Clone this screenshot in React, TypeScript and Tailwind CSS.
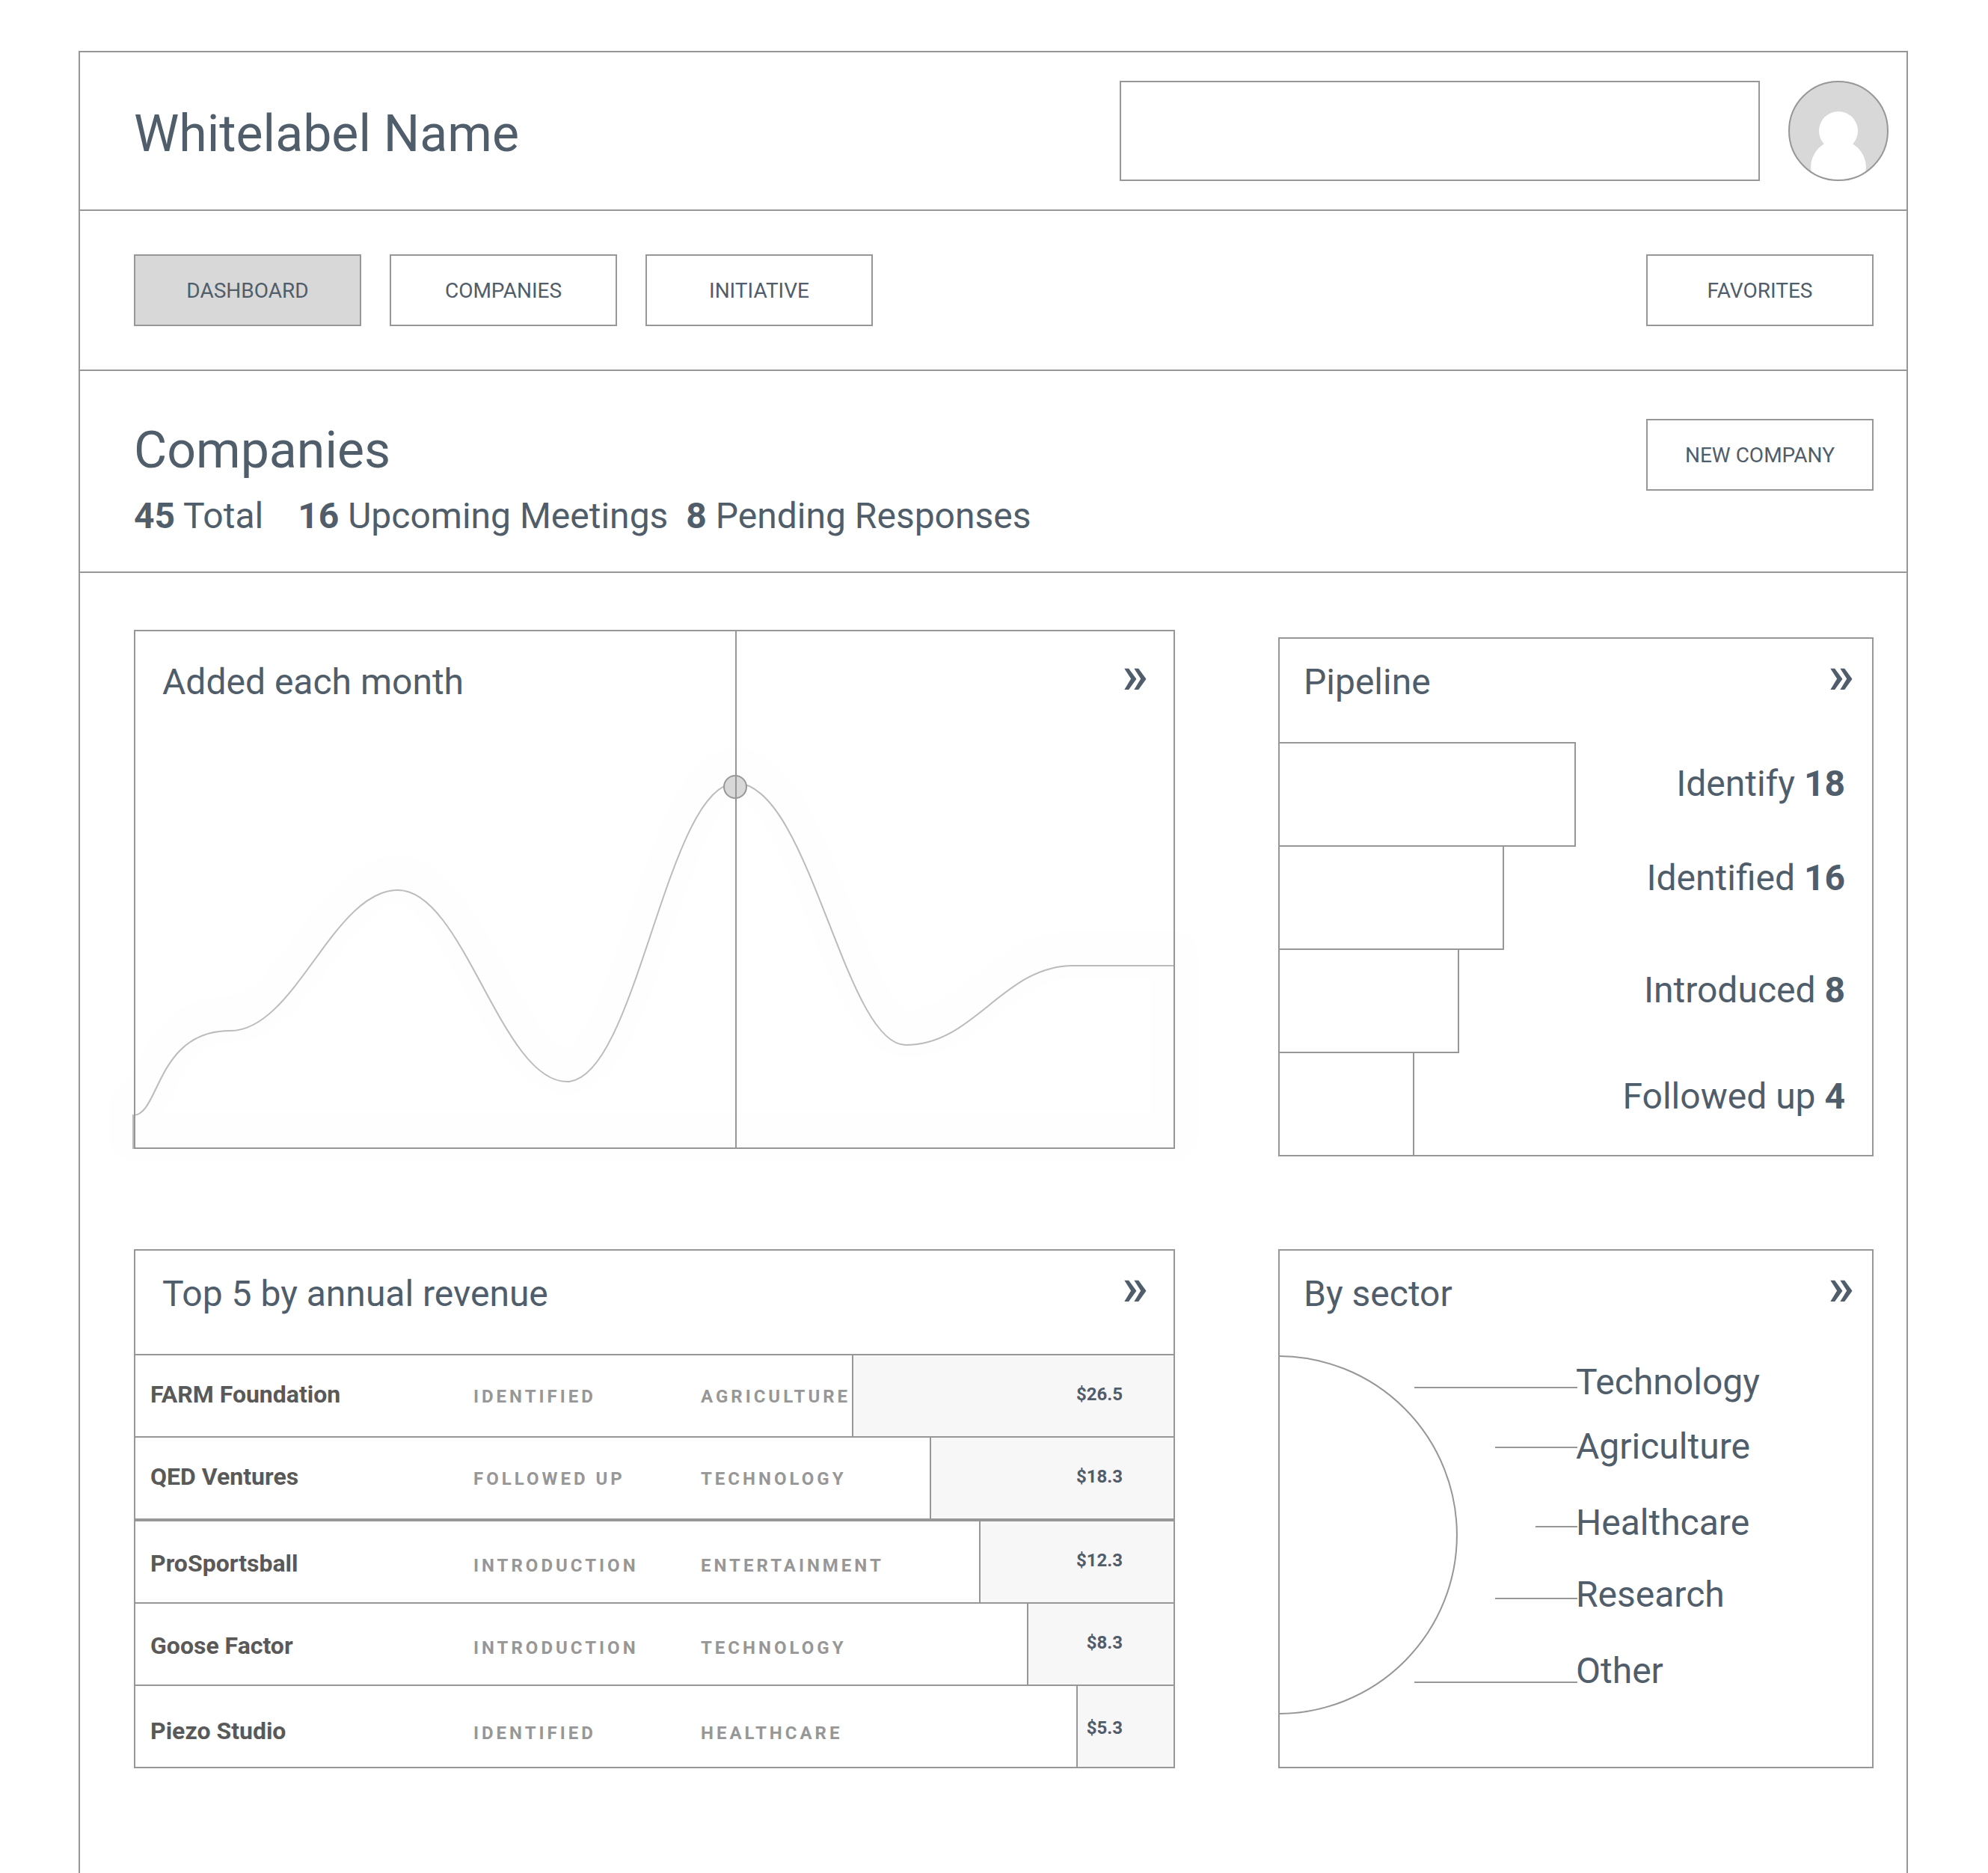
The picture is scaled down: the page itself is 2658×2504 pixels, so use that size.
import React from "react";

const stages = [
  { label: "Identify", count: 18, width: 50, bar: "h-[140px] border-y-2", text: "pt-7" },
  { label: "Identified", count: 16, width: 37.9, bar: "h-[138px] border-b-2 mt-[2px]", text: "pt-4" },
  { label: "Introduced", count: 8, width: 30.3, bar: "h-[138px] border-b-2 mt-[2px]", text: "pt-7" },
  { label: "Followed up", count: 4, width: 22.7, bar: "h-[136px] mt-[2px]", text: "pt-8" },
];

const companies = [
  { name: "FARM Foundation", status: "Identified", sector: "Agriculture", revenue: "$26.5", width: 31, cell: "h-[110px] border-t-2 pt-8", amount: "pt-8" },
  { name: "QED Ventures", status: "Followed up", sector: "Technology", revenue: "$18.3", width: 23.5, cell: "h-[110px] border-t-2 pt-8", amount: "pt-8" },
  { name: "ProSportsball", status: "Introduction", sector: "Entertainment", revenue: "$12.3", width: 18.7, cell: "h-[112px] border-t-4 pt-9", amount: "pt-8" },
  { name: "Goose Factor", status: "Introduction", sector: "Technology", revenue: "$8.3", width: 14.1, cell: "h-[110px] border-t-2 pt-9", amount: "pt-8" },
  { name: "Piezo Studio", status: "Identified", sector: "Healthcare", revenue: "$5.3", width: 9.4, cell: "h-[110px] border-t-2 pt-10", amount: "pt-9" },
];

const sectors = [
  { label: "Technology", gap: "" },
  { label: "Agriculture", gap: "mt-7.5" },
  { label: "Healthcare", gap: "mt-11.5" },
  { label: "Research", gap: "mt-10" },
  { label: "Other", gap: "mt-11.5" },
];

const curve =
  "M-3 647C33 647 27 534 127 534C214 534 264 346 351 346C439 346 489 602 577 602C670 602 710 203 803 203C901 203 948 553 1030 553C1122 553 1160 447 1254 447H1389V691H-3Z";

function BoxButton({ children, active = false }: { children: React.ReactNode; active?: boolean }) {
  return (
    <button
      type="button"
      className={
        "h-24 w-[304px] shrink-0 border-2 border-[#979797] pt-0.5 text-[28px] leading-8 uppercase " +
        (active ? "bg-[#d8d8d8]" : "bg-white")
      }
    >
      {children}
    </button>
  );
}

function CardHeader({ title, pad = "pl-9 pr-[34px]" }: { title: string; pad?: string }) {
  return (
    <div className={"flex h-[138px] items-start justify-between " + pad}>
      <h2 className="pt-[30px] text-[48px] leading-[56px]">{title}</h2>
      <a href="#" aria-label={title + " details"} className="pt-[9px] text-[72px] leading-[80px] font-medium">
        »
      </a>
    </div>
  );
}

function Avatar() {
  return (
    <svg viewBox="0 0 134 134" className="size-[134px] shrink-0" role="img" aria-label="User">
      <defs>
        <clipPath id="avatar-clip">
          <circle cx="67" cy="67" r="66" />
        </clipPath>
      </defs>
      <circle cx="67" cy="67" r="66" fill="#d8d8d8" />
      <g clipPath="url(#avatar-clip)" fill="#fff">
        <circle cx="67" cy="67" r="26" />
        <circle cx="67" cy="116" r="37" />
      </g>
      <circle cx="67" cy="67" r="66" fill="none" stroke="#979797" strokeWidth="2" />
    </svg>
  );
}

export default function App() {
  return (
    <div className="flex min-h-screen flex-col bg-white pt-[68px] pr-[107px] pl-[105px] font-['Roboto',sans-serif] text-[#505d6a]">
      <div className="flex grow flex-col border-2 border-b-0 border-[#979797]">
        <header className="flex items-center justify-between border-b-2 border-[#979797] py-[38px] pr-6 pl-[72px]">
          <h1 className="pt-2 text-[68px] leading-[80px]">Whitelabel Name</h1>
          <div className="flex items-center gap-[38px]">
            <input
              type="search"
              aria-label="Search"
              className="h-[134px] w-[856px] border-2 border-[#979797] bg-white px-8 text-[48px] outline-none"
            />
            <Avatar />
          </div>
        </header>

        <nav className="flex justify-between border-b-2 border-[#979797] py-[58px] pr-11 pl-[72px]">
          <div className="flex gap-[38px]">
            <BoxButton active>Dashboard</BoxButton>
            <BoxButton>Companies</BoxButton>
            <BoxButton>Initiative</BoxButton>
          </div>
          <BoxButton>Favorites</BoxButton>
        </nav>

        <section className="flex items-start justify-between border-b-2 border-[#979797] pt-16 pr-11 pb-[46px] pl-[72px]">
          <div>
            <h2 className="pt-0.5 text-[68px] leading-[80px]">Companies</h2>
            <p className="mt-5 flex text-[48px] leading-[56px]">
              <span className="mr-[46px]"><b>45</b> Total</span>
              <span className="mr-6"><b>16</b> Upcoming Meetings</span>
              <span><b>8</b> Pending Responses</span>
            </p>
          </div>
          <BoxButton>New company</BoxButton>
        </section>

        <main className="grid grid-cols-[1392fr_796fr] items-start gap-x-[138px] gap-y-[124px] pt-[76px] pr-11 pb-[140px] pl-[72px]">
          <section className="grid border-2 border-[#979797]">
            <svg viewBox="0 0 1388 690" className="col-start-1 row-start-1 w-full overflow-visible" role="img" aria-label="Companies added each month">
              <path d={curve} transform="translate(0 -15)" fill="none" stroke="#000" strokeOpacity="0.004" strokeWidth="64" strokeLinejoin="round" />
              <path d={curve} fill="none" stroke="#979797" strokeOpacity="0.65" strokeWidth="2" />
              <circle cx="802" cy="208" r="15" fill="#d8d8d8" stroke="#979797" strokeWidth="2" />
              <path d="M803 0V690" stroke="#979797" strokeWidth="2" />
            </svg>
            <div className="relative col-start-1 row-start-1 pt-2.5">
              <CardHeader title="Added each month" />
            </div>
          </section>

          <section className="mt-2.5 border-2 border-[#979797]">
            <CardHeader title="Pipeline" pad="pl-8 pr-6" />
            <ul>
              {stages.map((s) => (
                <li key={s.label} className="flex h-[138px] justify-between">
                  <div className={"border-r-2 border-[#979797] " + s.bar} style={{ width: s.width + "%" }} />
                  <p className={"pr-9 text-[48px] leading-[56px] " + s.text}>
                    {s.label} <b>{s.count}</b>
                  </p>
                </li>
              ))}
            </ul>
          </section>

          <section className="border-2 border-[#979797]">
            <CardHeader title="Top 5 by annual revenue" />
            <table className="w-full table-fixed border-separate border-spacing-0 text-left leading-10 font-bold">
              <colgroup>
                <col className="w-[452px]" />
                <col className="w-[304px]" />
                <col />
                <col className="w-[130px]" />
              </colgroup>
              <tbody>
                {companies.map((c) => (
                  <tr key={c.name} className="relative">
                    <th scope="row" className={"border-[#979797] pl-5 align-baseline text-[32px] text-[#595959] " + c.cell}>
                      {c.name}
                    </th>
                    <td className={"border-[#979797] align-baseline text-[24px] tracking-[4px] text-[#979797] uppercase " + c.cell}>
                      {c.status}
                    </td>
                    <td className={"border-[#979797] align-baseline text-[24px] tracking-[4px] text-[#979797] uppercase " + c.cell}>
                      {c.sector}
                    </td>
                    <td className={"border-[#979797] text-[24px] " + c.cell}>
                      <div
                        className={"absolute right-0 bottom-0 h-[108px] border-l-2 border-[#979797] bg-[#f7f7f7] pr-17 text-right " + c.amount}
                        style={{ width: c.width + "%" }}
                      >
                        {c.revenue}
                      </div>
                    </td>
                  </tr>
                ))}
              </tbody>
            </table>
          </section>

          <section className="border-2 border-[#979797]">
            <CardHeader title="By sector" pad="pl-8 pr-6" />
            <div className="flex pt-[2px] pb-[70px]">
              <svg viewBox="0 0 398 480" className="h-[480px] w-[398px] shrink-0" fill="none" stroke="#979797" strokeWidth="2" aria-hidden="true">
                <path d="M-2 1A239 239 0 0 1 -2 479" />
                <path d="M180 43H398M288 123H398M342 229H398M288 325H398M180 437H398" />
              </svg>
              <ul className="-ml-0.5 pt-2 text-[48px] leading-[56px]">
                {sectors.map((s) => (
                  <li key={s.label} className={s.gap}>
                    {s.label}
                  </li>
                ))}
              </ul>
            </div>
          </section>
        </main>
      </div>
    </div>
  );
}
